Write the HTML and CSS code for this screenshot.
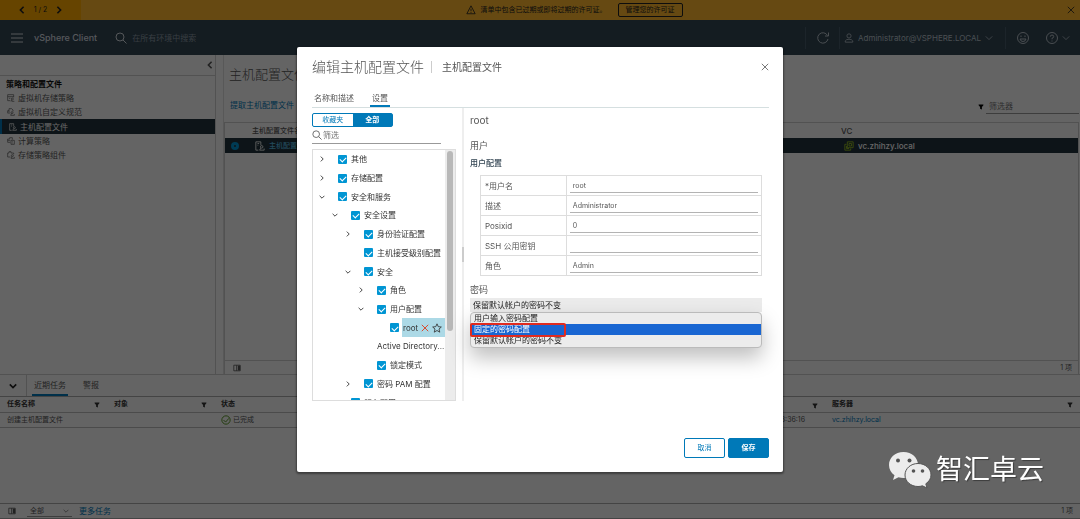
FILE: index.html
```html
<!DOCTYPE html>
<html lang="zh-CN">

<head>
    <meta charset="UTF-8">
    <meta name="viewport" content="width=device-width, initial-scale=1.0">
    <title>vSphere Client</title>
    <link rel="stylesheet" href="styles.css">
</head>

<body>

    <!-- 图标 -->
    <svg class="sprite" aria-hidden="true">
        <symbol id="i-down" viewBox="0 0 10 10"><path d="M1 3l4 4 4-4" /></symbol>
        <symbol id="i-right" viewBox="0 0 10 10"><path d="M3 1l4 4-4 4" /></symbol>
        <symbol id="i-left" viewBox="0 0 10 10"><path d="M7 1L3 5l4 4" /></symbol>
        <symbol id="i-close" viewBox="0 0 10 10"><path d="M1 1l8 8M9 1L1 9" /></symbol>
        <symbol id="i-search" viewBox="0 0 12 12"><circle cx="5" cy="5" r="4" /><path d="M8 8l3.500 3.500" /></symbol>
        <symbol id="i-filter" viewBox="0 0 10 10"><path class="solid" d="M1 1h8v1L6.500 5v4l-3-1V5L1 2z" /></symbol>
        <symbol id="i-columns" viewBox="0 0 10 10"><path d="M1 1.500h8v7H1zM4.500 1.500v7" /><path class="solid" d="M6 2h3v6H6z" /></symbol>
        <symbol id="i-storage" viewBox="0 0 12 12"><path d="M5 10H1V1h9v4M1 4h9M3 6.500h2" /><circle cx="8" cy="7.500" r="1.500" /><path d="M6 11l1-2M11 11H7" /></symbol>
        <symbol id="i-custom" viewBox="0 0 12 12"><path d="M1 8V4h2M3 9V1h4l2 2v2" /><circle cx="7.500" cy="7" r="1.500" /><path d="M6.500 8.500l-1 2.500H11V9" /></symbol>
        <symbol id="i-profile" viewBox="0 0 12 12"><path d="M4 11H1V1h6v4M3 3h2M3 5h1" /><circle cx="8" cy="7" r="1.500" /><path d="M7 8.500L5.500 11H11V9" /></symbol>
        <symbol id="i-compute" viewBox="0 0 12 12"><path d="M5 8H1V3h3V1h4v3M1 5h4M6 5h5v6H6zM8 7h1M8 9h1" /></symbol>
        <symbol id="i-component" viewBox="0 0 12 12"><path d="M5 9H1V3h2V1h3v2h4v2" /><circle cx="8" cy="7" r="1.500" /><path d="M7 8.500L6 11h5V9" /></symbol>
        <symbol id="i-vc" viewBox="0 0 12 12"><path d="M3 4H1v7h7V9M4 1h7v7H4zM6 3h3v3H6zM3 6v3h3" /></symbol>
    </svg>

    <div class="banner">
        <div class="pager">
            <button aria-label="上一条"><svg class="icon s8 bold"><use href="#i-left" /></svg></button>
            <span>1 / 2</span>
            <button aria-label="下一条"><svg class="icon s8 bold"><use href="#i-right" /></svg></button>
        </div>
        <div class="banner-msg">
            <svg class="icon s10" viewBox="0 0 12 12"><path d="M6 1l5 9.500H1zM6 4.500v3M6 8.500v1" /></svg>
            <span>清单中包含已过期或即将过期的许可证。</span>
            <button class="banner-btn">管理您的许可证</button>
        </div>
        <button aria-label="关闭横幅"><svg class="icon s8"><use href="#i-close" /></svg></button>
    </div>

    <header class="topbar">
        <button aria-label="菜单"><svg class="icon s12" viewBox="0 0 12 12"><path d="M0 2h12M0 6h12M0 10h12" /></svg></button>
        <span class="brand">vSphere Client</span>
        <label class="top-search">
            <svg class="icon s12"><use href="#i-search" /></svg>
            <input type="text" placeholder="在所有环境中搜索" aria-label="搜索">
        </label>
        <button class="top-item refresh" aria-label="刷新"><svg class="icon s12" viewBox="0 0 12 12"><path d="M10.500 3.500A5.200 5.200 0 1 0 11 7M11.500 .5v3.500H8" /></svg></button>
        <button class="top-item user">
            <svg class="icon s10" viewBox="0 0 12 12"><circle cx="6" cy="3.500" r="2.500" /><path d="M1.500 11V9.500Q2.500 7.500 6 7.500t4.500 2V11z" /></svg>
            Administrator@VSPHERE.LOCAL
            <svg class="icon s8"><use href="#i-down" /></svg>
        </button>
        <button class="top-item smile" aria-label="反馈"><svg class="icon s12" viewBox="0 0 12 12"><circle cx="6" cy="6" r="5.500" /><path d="M4 3.500v1.500M8 3.500v1.500M3 7h6Q8.500 9.500 6 9.500T3 7z" /></svg></button>
        <button class="top-item help" aria-label="帮助">
            <svg class="icon s12" viewBox="0 0 12 12"><circle cx="6" cy="6" r="5.500" /><path d="M4.300 4.700Q4.300 3 6 3t1.700 1.500T6 6.300v1M6 8.500v1" /></svg>
            <svg class="icon s8"><use href="#i-down" /></svg>
        </button>
    </header>

    <div class="main">
        <nav class="sidebar">
            <div class="sidebar-top"><button aria-label="收起"><svg class="icon s8 bold"><use href="#i-left" /></svg></button></div>
            <h2>策略和配置文件</h2>
            <a href="#"><svg class="icon s8"><use href="#i-storage" /></svg>虚拟机存储策略</a>
            <a href="#"><svg class="icon s8"><use href="#i-custom" /></svg>虚拟机自定义规范</a>
            <a href="#" class="current"><svg class="icon s8"><use href="#i-profile" /></svg>主机配置文件</a>
            <a href="#"><svg class="icon s8"><use href="#i-compute" /></svg>计算策略</a>
            <a href="#"><svg class="icon s8"><use href="#i-component" /></svg>存储策略组件</a>
        </nav>

        <div class="content">
            <h1>主机配置文件</h1>
            <div class="toolbar">
                <a href="#">提取主机配置文件</a>
                <label>
                    <svg class="icon s6"><use href="#i-filter" /></svg>
                    <input type="text" placeholder="筛选器" aria-label="筛选器">
                </label>
            </div>
            <div class="grid">
                <table>
                    <tr>
                        <th class="pick"></th>
                        <th>主机配置文件名称</th>
                        <th class="vc">VC</th>
                    </tr>
                    <tr class="selected">
                        <td class="pick"><input type="radio" name="profile" aria-label="主机配置文件" checked></td>
                        <td><svg class="icon s10"><use href="#i-profile" /></svg><a href="#">主机配置文件</a></td>
                        <td class="vc"><svg class="icon s10 green"><use href="#i-vc" /></svg>vc.zhihzy.local</td>
                    </tr>
                </table>
                <div class="grid-foot">
                    <svg class="icon s8"><use href="#i-columns" /></svg>
                    <span>1 项</span>
                </div>
            </div>
        </div>
    </div>

    <!-- 底部任务面板 -->
    <div class="tasks">
        <div class="task-tabs">
            <button class="fold" aria-label="折叠"><svg class="icon s8 bold"><use href="#i-down" /></svg></button>
            <button class="tab active">近期任务</button>
            <button class="tab">警报</button>
        </div>
        <table>
            <tr>
                <th class="c-name">任务名称<svg class="icon s6"><use href="#i-filter" /></svg></th>
                <th class="c-name">对象<svg class="icon s6"><use href="#i-filter" /></svg></th>
                <th>状态</th>
                <th><svg class="icon s6"><use href="#i-filter" /></svg></th>
                <th class="c-server">服务器<svg class="icon s6"><use href="#i-filter" /></svg></th>
            </tr>
            <tr>
                <td>创建主机配置文件</td>
                <td></td>
                <td><svg class="icon s10 ok" viewBox="0 0 12 12"><circle cx="6" cy="6" r="5" /><path d="M3 6l2.500 2.500L9.500 4" /></svg>已完成</td>
                <td class="time">13:36:16</td>
                <td><a href="#">vc.zhihzy.local</a></td>
            </tr>
        </table>
        <div class="task-foot">
            <svg class="icon s8"><use href="#i-columns" /></svg>
            <label class="scope">
                <select aria-label="任务范围"><option>全部</option></select>
                <svg class="icon s6"><use href="#i-down" /></svg>
            </label>
            <a href="#">更多任务</a>
            <span>1 项</span>
        </div>
    </div>

    <!-- 弹窗 -->
    <div class="backdrop">
        <div class="modal" role="dialog" aria-labelledby="dlg-title">
            <div class="modal-head">
                <h3 id="dlg-title">编辑主机配置文件</h3>
                <span class="sub">主机配置文件</span>
                <button aria-label="关闭"><svg class="icon s8"><use href="#i-close" /></svg></button>
            </div>
            <div class="modal-tabs">
                <button class="tab">名称和描述</button>
                <button class="tab active">设置</button>
            </div>

            <div class="modal-body">
                <div class="left">
                    <div class="toggle">
                        <button>收藏夹</button>
                        <button class="on">全部</button>
                    </div>
                    <label class="tree-search">
                        <svg class="icon s10"><use href="#i-search" /></svg>
                        <input type="text" placeholder="筛选" aria-label="筛选">
                    </label>
                    <div class="tree">
                        <ul>
                            <li><svg class="icon s6"><use href="#i-right" /></svg><label><input type="checkbox" checked>其他</label></li>
                            <li><svg class="icon s6"><use href="#i-right" /></svg><label><input type="checkbox" checked>存储配置</label></li>
                            <li><svg class="icon s6"><use href="#i-down" /></svg><label><input type="checkbox" checked>安全和服务</label></li>
                            <li class="d1"><svg class="icon s6"><use href="#i-down" /></svg><label><input type="checkbox" checked>安全设置</label></li>
                            <li class="d2"><svg class="icon s6"><use href="#i-right" /></svg><label><input type="checkbox" checked>身份验证配置</label></li>
                            <li class="d2 leaf"><label><input type="checkbox" checked>主机接受级别配置</label></li>
                            <li class="d2"><svg class="icon s6"><use href="#i-down" /></svg><label><input type="checkbox" checked>安全</label></li>
                            <li class="d3"><svg class="icon s6"><use href="#i-right" /></svg><label><input type="checkbox" checked>角色</label></li>
                            <li class="d3"><svg class="icon s6"><use href="#i-down" /></svg><label><input type="checkbox" checked>用户配置</label></li>
                            <li class="d4 leaf">
                                <input type="checkbox" id="node-root" checked>
                                <span class="node">
                                    <label for="node-root">root</label>
                                    <svg class="icon s8 red"><use href="#i-close" /></svg>
                                    <svg class="icon s10" viewBox="0 0 12 12"><path d="M6 1l1.500 3.400 3.700.4-2.800 2.400.9 3.800L6 9l-3.300 2 .9-3.800L.8 4.800l3.700-.4z" /></svg>
                                </span>
                            </li>
                            <li class="d3 leaf">Active Directory...</li>
                            <li class="d3 leaf"><label><input type="checkbox" checked>锁定模式</label></li>
                            <li class="d2"><svg class="icon s6"><use href="#i-right" /></svg><label><input type="checkbox" checked>密码 PAM 配置</label></li>
                            <li class="d1 leaf"><label><input type="checkbox" checked>服务配置</label></li>
                        </ul>
                        <div class="scrollbar"><div class="thumb"></div></div>
                    </div>
                </div>

                <div class="splitter"><div class="grip"></div></div>

                <div class="right">
                    <h4>root</h4>
                    <h5>用户</h5>
                    <h6>用户配置</h6>
                    <table class="form">
                        <tr>
                            <th><label for="f-name">*用户名</label></th>
                            <td><input type="text" id="f-name" value="root"></td>
                        </tr>
                        <tr>
                            <th><label for="f-desc">描述</label></th>
                            <td><input type="text" id="f-desc" value="Administrator"></td>
                        </tr>
                        <tr>
                            <th><label for="f-id">Posixid</label></th>
                            <td><input type="text" id="f-id" value="0"></td>
                        </tr>
                        <tr>
                            <th><label for="f-key">SSH 公用密钥</label></th>
                            <td><input type="text" id="f-key"></td>
                        </tr>
                        <tr>
                            <th><label for="f-role">角色</label></th>
                            <td><input type="text" id="f-role" value="Admin"></td>
                        </tr>
                    </table>
                    <label class="pwd-label" for="f-pwd">密码</label>
                    <div class="dropdown">
                        <select id="f-pwd"><option>保留默认帐户的密码不变</option></select>
                        <ul class="menu">
                            <li>用户输入密码配置</li>
                            <li class="hover">固定的密码配置<span class="mark"></span></li>
                            <li>保留默认帐户的密码不变</li>
                        </ul>
                    </div>
                </div>
            </div>

            <div class="modal-foot">
                <button class="btn">取消</button>
                <button class="btn primary">保存</button>
            </div>
        </div>
    </div>

    <!-- 水印 -->
    <div class="watermark">
        <svg viewBox="0 0 44 38">
            <path class="bubble" d="M15.500 1C7 1 1 6.800 1 14c0 4.200 2 7.800 5.500 10.200L5 29l5.500-2.800c1.600.5 3.300.8 5 .8C24 27 30 21.200 30 14S24 1 15.500 1z" />
            <path class="bubble edge" d="M30 12.500c-7.200 0-13 5-13 11.500s5.800 11.500 13 11.500c1.500 0 3-.2 4.400-.7L39 37l-1.200-4.200C41 30.700 43 27.600 43 24c0-6.500-5.800-11.500-13-11.500z" />
            <circle cx="10" cy="9.500" r="2" /><circle cx="21.500" cy="9.500" r="2" />
            <circle cx="25.500" cy="20" r="1.800" /><circle cx="34.500" cy="20" r="1.800" />
        </svg>
        <span>智汇卓云</span>
    </div>

</body>

</html>
```
FILE: styles.css
```css
* {
    box-sizing: border-box;
}

body {
    margin: 0;
    height: 100vh;
    display: flex;
    flex-direction: column;
    background: #fafafa;
    color: #565656;
    font-family: Inter, "Noto Sans CJK SC", sans-serif;
    font-size: 8px;
    line-height: 12px;
    overflow: hidden;
}

h1, h2, h3, h4, h5, h6, ul {
    margin: 0;
    padding: 0;
    font-weight: normal;
    list-style: none;
}

button, input, select {
    margin: 0;
    padding: 0;
    border: 0;
    border-radius: 0;
    outline: 0;
    background: none;
    color: inherit;
    font: inherit;
    appearance: none;
}

button {
    display: flex;
    align-items: center;
    justify-content: center;
}

a {
    color: #0079b8;
    text-decoration: none;
}

table {
    width: 100%;
    border-collapse: collapse;
    table-layout: fixed;
}

th, td {
    padding: 0;
    text-align: left;
    white-space: nowrap;
}

/* 图标 */
.sprite {
    position: absolute;
    width: 0;
    height: 0;
}

.icon {
    flex: none;
    fill: none;
    stroke: currentColor;
    stroke-width: 1;
}

.icon .solid, .solid {
    fill: currentColor;
    stroke: none;
}

.s6 {
    width: 6px;
    height: 6px;
}

.s8 {
    width: 8px;
    height: 8px;
}

.s10 {
    width: 10px;
    height: 10px;
}

.s12 {
    width: 12px;
    height: 12px;
}

.bold {
    stroke-width: 2;
}

/* 顶部横幅 */
.banner {
    display: flex;
    align-items: center;
    height: 20px;
    padding-right: 5px;
    background: #ffb72d;
    color: #222;
    font-size: 7px;
}

.pager {
    display: flex;
    align-items: center;
    justify-content: center;
    gap: 8px;
    width: 81px;
    height: 20px;
    background: #ffaa00;
}

.banner-msg {
    flex: 1;
    display: flex;
    align-items: center;
    justify-content: center;
    gap: 5px;
}

.banner-btn {
    width: 65px;
    height: 14px;
    margin-left: 6px;
    border: 1px solid #222;
    border-radius: 2px;
}

/* 导航栏 */
.topbar {
    display: flex;
    align-items: center;
    height: 35px;
    padding-left: 11px;
    background: #324654;
    color: #d5dbe0;
}

.brand {
    margin: 0 18px 0 11px;
    font-size: 9px;
    font-weight: 500;
}

.top-search {
    flex: 1;
    display: flex;
    align-items: center;
    gap: 5px;
}

.top-search input::placeholder {
    color: #8d9aa5;
}

.top-item {
    height: 22px;
    gap: 4px;
    border-left: 1px solid #465a69;
    color: #b9c3cb;
}

.refresh {
    width: 34px;
}

.user {
    justify-content: flex-start;
    width: 166px;
    padding-left: 4px;
}

.smile {
    width: 35px;
}

.help {
    width: 40px;
    padding-right: 5px;
    border: 0;
    gap: 4px;
}

/* 侧边栏 */
.main {
    flex: 1;
    display: flex;
    gap: 7px;
    min-height: 0;
    border-bottom: 1px solid #ccc;
}

.sidebar {
    width: 216px;
    border-right: 1px solid #ccc;
}

.sidebar-top {
    display: flex;
    justify-content: flex-end;
    height: 21px;
    padding-right: 1px;
    border-bottom: 1px solid #ccc;
}

.sidebar h2 {
    padding: 2px 6px 1px;
    color: #111;
    font-size: 8px;
    font-weight: bold;
    line-height: 12px;
}

.sidebar a {
    display: flex;
    align-items: center;
    gap: 3px;
    height: 14px;
    padding-left: 7px;
    color: #565656;
}

.sidebar a.current {
    height: 15px;
    border-left: 2px solid #0079b8;
    background: #22343c;
    color: #fff;
}

.content {
    flex: 1;
    display: flex;
    flex-direction: column;
    padding-right: 1px;
    border-left: 1px solid #ddd;
}

.content h1 {
    padding: 9px 5px 0;
    font-size: 13px;
    font-weight: 300;
    line-height: 20px;
}

.toolbar {
    display: flex;
    justify-content: space-between;
    height: 38px;
    padding: 15px 0 8px 6px;
}

.toolbar label {
    display: flex;
    align-items: center;
    gap: 2px;
    color: #000;
}

.toolbar input {
    width: 93px;
    height: 15px;
    padding-left: 3px;
    border-bottom: 1px solid #999;
}

.grid {
    flex: 1;
    display: flex;
    flex-direction: column;
    justify-content: space-between;
    border: 1px solid #ccc;
    border-bottom: 0;
    font-size: 7px;
}

.grid th, .grid td {
    height: 15px;
    padding-left: 6px;
    font-weight: 500;
}

.grid .pick {
    width: 21px;
}

.grid .vc {
    width: 243px;
    font-size: 8px;
}

.grid .icon {
    margin-right: 4px;
    vertical-align: middle;
}

.grid .selected {
    background: #22343c;
    color: #fff;
}

.selected td + td {
    padding-left: 9px;
}

.selected a {
    color: #57b9e0;
}

.pick input {
    display: block;
    width: 8px;
    height: 8px;
    border: 3px solid #0095d3;
    border-radius: 50%;
    background: #22343c;
}

.green {
    color: #9ac220;
}

.grid-foot {
    display: flex;
    align-items: center;
    justify-content: space-between;
    height: 14px;
    padding: 0 6px 0 8px;
    border-top: 1px solid #ccc;
}

/* 任务面板 */
.tasks {
    display: flex;
    flex-direction: column;
    height: 144px;
    border-bottom: 1px solid #aaa;
    font-size: 7px;
}

.task-tabs {
    display: flex;
    height: 22px;
    border-bottom: 1px solid #aaa;
    font-size: 8px;
}

.fold {
    width: 27px;
    border-right: 1px solid #ccc;
    color: #222;
}

.tab {
    padding: 0 2px;
    border-bottom: 2px solid transparent;
}

.tab.active {
    border-color: #0079b8;
}

.task-tabs .tab {
    margin-left: 5px;
}

.task-tabs .tab + .tab {
    margin-left: 13px;
}

.tasks th, .tasks td {
    height: 15px;
    padding-left: 7px;
    border-bottom: 1px solid #bbb;
}

.tasks th {
    color: #333;
    font-weight: bold;
}

.tasks th .icon {
    float: right;
    margin: 4px 7px 0 0;
}

.c-name {
    width: 107px;
}

.c-server {
    width: 255px;
}

.tasks .time {
    padding-right: 20px;
    text-align: right;
}

.ok {
    margin-right: 2px;
    color: #3c8500;
    vertical-align: middle;
}

.task-foot {
    display: flex;
    align-items: center;
    height: 15px;
    margin-top: auto;
    padding: 0 7px 0 8px;
    border-top: 1px solid #aaa;
}

.task-foot a {
    flex: 1;
    font-size: 8px;
}

.scope {
    display: flex;
    align-items: center;
    width: 45px;
    height: 12px;
    margin: 0 7px 0 11px;
    padding: 0 3px;
    border-bottom: 1px solid #999;
}

.scope select {
    flex: 1;
}

/* 弹窗 */
.backdrop {
    position: fixed;
    inset: 0;
    display: flex;
    align-items: center;
    justify-content: center;
    background: rgba(0, 0, 0, 0.6);
}

.modal {
    width: 45%;
    padding: 9px 14px 14px 15px;
    border-radius: 2px;
    background: #fff;
    box-shadow: 0 1px 2px 1px rgba(0, 0, 0, 0.4);
}

.modal-head {
    display: flex;
    align-items: center;
    height: 22px;
}

.modal-head h3 {
    padding-right: 7px;
    font-size: 14px;
    font-weight: 300;
    line-height: 22px;
}

.modal-head .sub {
    flex: 1;
    padding-left: 10px;
    border-left: 1px solid #ccc;
    font-size: 10px;
}

.modal-tabs {
    display: flex;
    gap: 14px;
    height: 18px;
    margin-top: 12px;
    border-bottom: 1px solid #d5dfe0;
}

.modal-body {
    display: flex;
}

.left {
    width: 31.5%;
    padding-top: 5px;
}

.toggle {
    display: flex;
    width: 81px;
    height: 14px;
    border: 1px solid #0079b8;
    border-radius: 2px;
    color: #0079b8;
    font-size: 7px;
}

.toggle button {
    flex: 1;
}

.toggle .on {
    background: #0079b8;
    color: #fff;
    font-weight: bold;
}

.tree-search {
    display: flex;
    align-items: center;
    gap: 1px;
    width: 129px;
    height: 17px;
    border-bottom: 1px solid #999;
}

.tree {
    display: flex;
    height: 252px;
    margin-top: 5px;
    border: 1px solid #ddd;
    color: #333;
    overflow: hidden;
}

.tree ul {
    flex: 1;
    display: grid;
    grid-auto-rows: 1fr;
    height: 262px;
}

.tree li {
    display: flex;
    align-items: center;
    gap: 13px;
    padding-left: 6px;
    white-space: nowrap;
}

.tree .s6 {
    stroke-width: 1.5;
}

.tree .d1 {
    padding-left: 19px;
}

.tree .d2 {
    padding-left: 32px;
}

.tree .d3 {
    padding-left: 45px;
}

.tree .d4 {
    padding-left: 58px;
    gap: 3px;
}

/* 叶子节点前面没有箭头，留出位置 */
.tree .leaf::before {
    content: "";
    width: 6px;
}

.tree .d4::before {
    margin-right: 10px;
}

.tree label {
    display: flex;
    align-items: center;
    gap: 4px;
}

.tree input {
    display: grid;
    place-items: center;
    flex: none;
    width: 9px;
    height: 9px;
    border-radius: 1px;
    background: #0095d3;
}

.tree input::before {
    content: "";
    width: 5px;
    height: 3px;
    border: solid #fff;
    border-width: 0 0 1px 1px;
    transform: rotate(-45deg);
}

.node {
    flex: 1;
    display: flex;
    align-items: center;
    justify-content: space-between;
    align-self: stretch;
    padding: 0 3px 0 1px;
    background: #acd9e6;
}

.red {
    color: #e62700;
}

.scrollbar {
    width: 10px;
    padding: 1px 2px;
    background: #ececec;
}

.thumb {
    height: 180px;
    border-radius: 3px;
    background: #b8b8b8;
}

.splitter {
    display: flex;
    align-items: center;
    width: 2px;
    margin: 0 6px;
    background: #eee;
}

.grip {
    width: 2px;
    height: 15px;
    background: #ccc;
}

.right {
    flex: 1;
    padding: 4px 7px 0 0;
}

.right h4 {
    font-size: 10px;
    line-height: 16px;
}

.right h5 {
    margin-top: 10px;
    font-size: 9px;
    line-height: 16px;
}

.right h6 {
    margin: 2px 0 5px;
    color: #314351;
    font-size: 8px;
    font-weight: 500;
    line-height: 14px;
}

.form {
    width: auto;
    margin-left: 10px;
}

.form th, .form td {
    height: 20px;
    border: 1px solid #ddd;
    font-weight: normal;
}

.form th {
    width: 86px;
    padding-left: 4px;
}

.form td {
    width: 196px;
    padding: 0 3px;
}

.form input {
    display: block;
    width: 100%;
    height: 14px;
    padding-left: 3px;
    border-bottom: 1px solid #b3b3b3;
    font-size: 7px;
}

.pwd-label {
    display: block;
    margin-top: 6px;
    font-size: 9px;
    line-height: 16px;
}

.dropdown {
    position: relative;
    color: #222;
}

.dropdown select {
    display: block;
    width: 100%;
    height: 14px;
    padding-left: 3px;
    background: #ebebeb;
}

.menu {
    position: absolute;
    top: 14px;
    left: 0;
    right: 0;
    padding: 0 0 1px;
    border: 1px solid #bbb;
    border-radius: 4px;
    background: #ececec;
    box-shadow: 0 10px 20px rgba(0, 0, 0, 0.25);
    line-height: 11px;
}

.menu li {
    position: relative;
    padding-left: 3px;
}

.menu .hover {
    z-index: 1;
    background: #1966d2;
    color: #fff;
}

.mark {
    position: absolute;
    top: -1px;
    bottom: -2px;
    left: -1px;
    width: 96px;
    border: 2px solid #e02b20;
    border-radius: 2px;
}

.modal-foot {
    display: flex;
    justify-content: flex-end;
    gap: 3px;
    margin-top: 37px;
}

.btn {
    width: 41px;
    height: 20px;
    border: 1px solid #0079b8;
    border-radius: 2px;
    color: #0079b8;
    font-size: 7px;
}

.btn.primary {
    background: #0079b8;
    color: #fff;
    font-weight: bold;
}

/* 水印 */
.watermark {
    position: fixed;
    right: 36px;
    bottom: 30px;
    display: flex;
    align-items: center;
    gap: 4px;
    color: #fff;
    font-size: 27px;
    line-height: 38px;
    text-shadow: 1px 1px 1px rgba(0, 0, 0, 0.4);
}

.watermark svg {
    width: 44px;
    height: 38px;
    fill: #555;
}

.watermark .bubble {
    fill: #ececec;
}

.watermark .edge {
    stroke: #555;
    stroke-width: 1;
}
```
